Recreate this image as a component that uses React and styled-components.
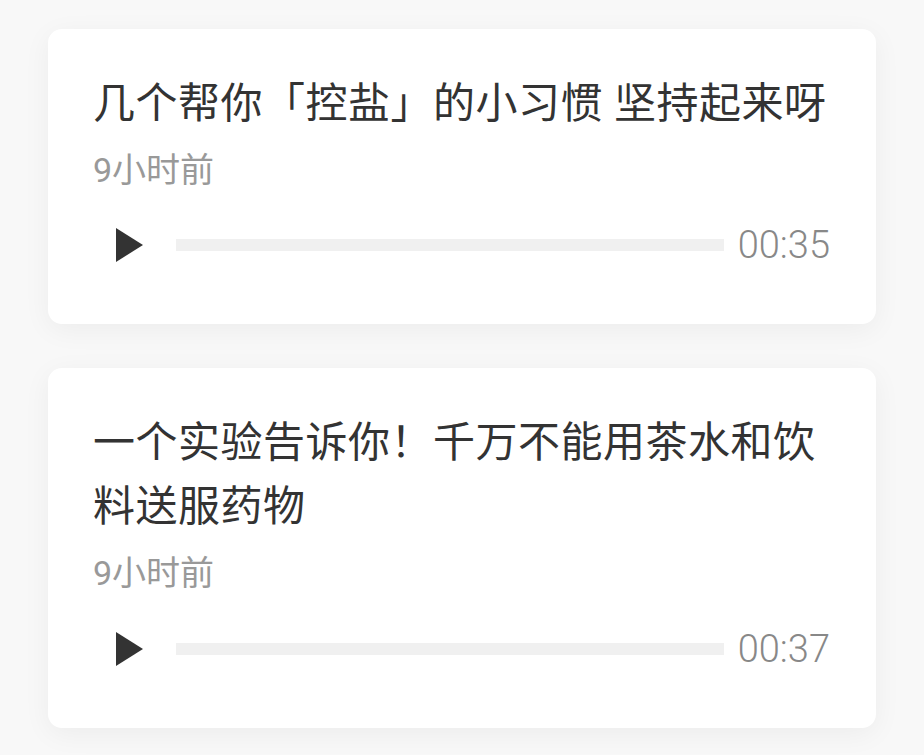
import React from "react";
import styled, { createGlobalStyle } from "styled-components";

const GlobalStyle = createGlobalStyle`
  html, body {
    margin: 0;
    padding: 0;
    background: #f8f8f8;
    font-family: Roboto, "Noto Sans CJK SC", sans-serif;
  }
`;

const List = styled.div`
  display: flex;
  flex-direction: column;
  gap: 44px;
  padding: 29px 48px 40px;
`;

const Card = styled.div`
  background: #fff;
  border-radius: 14px;
  box-shadow: 0 6px 28px rgba(0, 0, 0, 0.05);
  padding: 43px 46px 49px 45px;
  display: flex;
  flex-direction: column;
`;

const Title = styled.h2`
  margin: 0 0 10px;
  font-size: 42px;
  line-height: 64px;
  font-weight: 400;
  color: #333;
  letter-spacing: 0.5px;
`;

const Time = styled.div`
  font-size: 34px;
  line-height: 48px;
  font-weight: 400;
  color: #999;
`;

const Player = styled.div`
  display: flex;
  align-items: center;
  height: 60px;
  margin-top: ${({ $gap }) => $gap}px;
`;

const PlayButton = styled.button`
  width: 73px;
  height: 60px;
  padding: 0;
  border: none;
  background: none;
  display: flex;
  align-items: center;
  justify-content: center;
  flex-shrink: 0;
`;

const Track = styled.div`
  flex: 1;
  height: 12px;
  margin-left: 10px;
  background: #f0f0f0;
`;

const Duration = styled.span`
  margin-left: 14px;
  font-size: 38px;
  font-weight: 300;
  color: #888;
  line-height: 1;
`;

const PlayIcon = () => (
  <svg width="27" height="34" viewBox="0 0 27 34">
    <path d="M0 0 L27 17 L0 34 Z" fill="#333" />
  </svg>
);

const items = [
  { title: "几个帮你「控盐」的小习惯 坚持起来呀", time: "9小时前", duration: "00:35", gap: 21 },
  { title: "一个实验告诉你！千万不能用茶水和饮料送服药物", time: "9小时前", duration: "00:37", gap: 22 },
];

export default function App() {
  return (
    <>
      <GlobalStyle />
      <List>
        {items.map((item) => (
          <Card key={item.title}>
            <Title>{item.title}</Title>
            <Time>{item.time}</Time>
            <Player $gap={item.gap}>
              <PlayButton>
                <PlayIcon />
              </PlayButton>
              <Track />
              <Duration>{item.duration}</Duration>
            </Player>
          </Card>
        ))}
      </List>
    </>
  );
}
